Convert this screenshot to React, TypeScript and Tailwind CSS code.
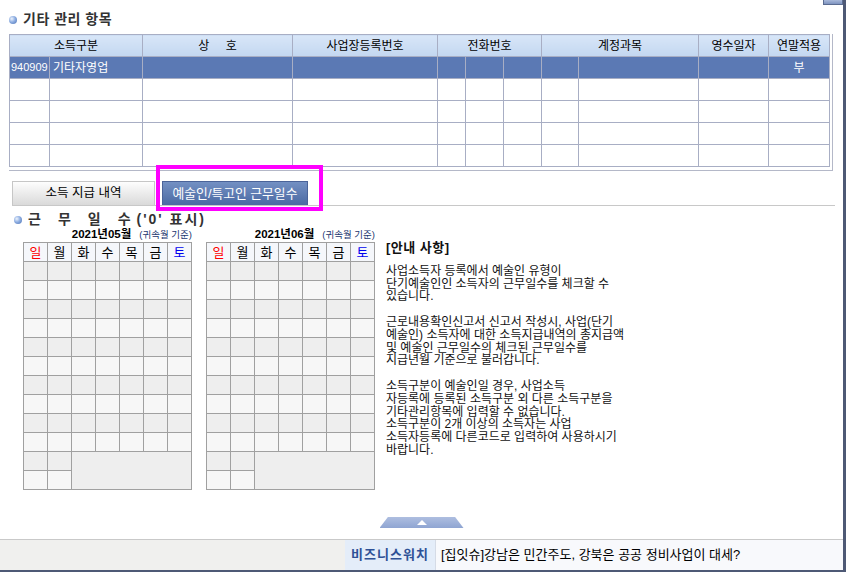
import React from 'react';

const days = ['일', '월', '화', '수', '목', '금', '토'];

const notice = [
  '사업소득자 등록에서 예술인 유형이',
  '단기예술인인 소득자의 근무일수를 체크할 수',
  '있습니다.',
  '',
  '근로내용확인신고서 신고서 작성시, 사업(단기',
  '예술인) 소득자에 대한 소득지급내역의 총지급액',
  '및 예술인 근무일수의 체크된 근무일수를',
  '지급년월 기준으로 불러갑니다.',
  '',
  '소득구분이 예술인일 경우, 사업소득',
  '자등록에 등록된 소득구분 외 다른 소득구분을',
  '기타관리항목에 입력할 수 없습니다.',
  '소득구분이 2개 이상의 소득자는 사업',
  '소득자등록에 다른코드로 입력하여 사용하시기',
  '바랍니다.',
];

function Bullet() {
  return (
    <span className="inline-block w-[8px] h-[8px] rounded-full bg-[radial-gradient(circle_at_35%_35%,#eef4fd_0%,#8eaee2_45%,#4b70b2_100%)]" />
  );
}

function Calendar({ label }: { label: string }) {
  const cell = 'p-0 h-[19px] border border-[#a0a0a0]';
  return (
    <div className="w-[169px]">
      <div className="h-[14px] flex items-center justify-end gap-[8px]">
        <span className="text-[11.5px] font-bold text-black leading-none">{label}</span>
        <span className="text-[9.5px] text-[#22366f] leading-none">(귀속월 기준)</span>
      </div>
      <table className="table-fixed border-collapse w-[169px]">
        <tbody>
          <tr className="bg-[#f5f7fb]">
            {days.map((d, i) => (
              <td
                key={d}
                className={`${cell} text-center text-[13px] leading-none ${
                  i === 0 ? 'text-[#ff0000]' : i === 6 ? 'text-[#0000ee]' : 'text-black'
                }`}
              >
                {d}
              </td>
            ))}
          </tr>
          {Array.from({ length: 10 }).map((_, r) => (
            <tr key={r} className={r % 2 === 0 ? 'bg-[#eeeeee]' : 'bg-[#f7f7f7]'}>
              {days.map((d) => (
                <td key={d} className={cell} />
              ))}
            </tr>
          ))}
          <tr className="bg-[#eeeeee]">
            <td className={cell} />
            <td className={cell} />
            <td className={`${cell} bg-[#eeeeee]`} colSpan={5} rowSpan={2} />
          </tr>
          <tr className="bg-[#f7f7f7]">
            <td className={cell} />
            <td className={cell} />
          </tr>
        </tbody>
      </table>
    </div>
  );
}

export default function App() {
  const th =
    'p-0 h-[22px] border border-[#a8aec4] bg-gradient-to-b from-[#d8e6f8] to-[#c3d7f0] font-normal text-center text-[12px] text-black';
  const td = 'p-0 h-[22px] border border-[#a8aec4]';

  return (
    <div className="relative w-[846px] h-[572px] flex flex-col bg-white border-r-[3px] border-b-[2px] border-[#4e5975] font-['Liberation_Sans','Noto_Sans_CJK_KR',sans-serif] text-black overflow-hidden">
      {/* scroll button remnant */}
      <div className="absolute top-0 right-0 w-[20px] h-[5px] border border-t-0 border-[#5b6c91] bg-gradient-to-b from-[#a9b9da] to-[#7e93c0]" />

      {/* 기타 관리 항목 */}
      <div className="pt-[12px] pl-[9px] flex items-center gap-[6px] h-[27px]">
        <Bullet />
        <span className="text-[14px] font-bold tracking-[0.5px] text-[#333333] leading-[15px]">기타 관리 항목</span>
      </div>

      <div className="mt-[7px] ml-[9px] w-[824px] border-r border-b border-[#b4b8c8] pr-[3px] pb-[3px]">
        <table className="table-fixed border-collapse w-[820px]">
          <colgroup>
            <col className="w-[40px]" />
            <col className="w-[93px]" />
            <col className="w-[150px]" />
            <col className="w-[145px]" />
            <col className="w-[28px]" />
            <col className="w-[38px]" />
            <col className="w-[38px]" />
            <col className="w-[37px]" />
            <col className="w-[120px]" />
            <col className="w-[70px]" />
            <col className="w-[61px]" />
          </colgroup>
          <thead>
            <tr>
              <th className={th} colSpan={2}>소득구분</th>
              <th className={`${th} whitespace-pre`}>{'상     호'}</th>
              <th className={th}>사업장등록번호</th>
              <th className={th} colSpan={3}>전화번호</th>
              <th className={th} colSpan={2}>계정과목</th>
              <th className={th}>영수일자</th>
              <th className={th}>연말적용</th>
            </tr>
          </thead>
          <tbody>
            <tr className="bg-[#5b79b4] text-white">
              <td className={`${td} text-[11px] pl-[1px] whitespace-nowrap overflow-hidden`}>940909</td>
              <td className={`${td} text-[12px] pl-[3px]`}>기타자영업</td>
              <td className={td} />
              <td className={td} />
              <td className={td} />
              <td className={td} />
              <td className={td} />
              <td className={td} />
              <td className={td} />
              <td className={td} />
              <td className={`${td} text-[12px] text-center`}>부</td>
            </tr>
            {Array.from({ length: 4 }).map((_, r) => (
              <tr key={r}>
                {Array.from({ length: 11 }).map((__, c) => (
                  <td key={c} className={td} />
                ))}
              </tr>
            ))}
          </tbody>
        </table>
      </div>

      {/* tabs */}
      <div className="mt-[10px] ml-[12px] w-[823px] flex gap-[7px] border-b border-[#c8c8c8]">
        <div className="w-[143px] h-[24px] flex items-center justify-center border border-b-0 border-[#c6c6c6] bg-gradient-to-b from-[#fdfdfd] to-[#dadada] text-[12.5px] text-black">
          소득 지급 내역
        </div>
        <div className="w-[146px] h-[24px] flex items-center justify-center border border-b-0 border-[#4a6399] bg-gradient-to-b from-[#7390c3] to-[#4c6aa3] text-[12.8px] text-white">
          예술인/특고인 근무일수
        </div>
      </div>

      {/* annotation box */}
      <div className="absolute left-[156px] top-[165px] w-[167px] h-[46px] border-[4px] border-[#ff00ff]" />

      {/* 근무일수 */}
      <div className="mt-[6px] pl-[14px] flex items-center gap-[6px] h-[15px]">
        <Bullet />
        <div className="flex items-center gap-[6px] text-[14px] font-bold text-[#333333] leading-[15px]">
          <div className="flex gap-[17px]">
            <span>근</span>
            <span>무</span>
            <span>일</span>
            <span>수</span>
          </div>
          <span className="tracking-[2px]">('0' 표시)</span>
        </div>
      </div>

      <div className="mt-[1px] pl-[23px] flex items-start">
        <Calendar label="2021년05월" />
        <div className="ml-[14px]">
          <Calendar label="2021년06월" />
        </div>
        <div className="ml-[11px] mt-[14px] text-[12px] leading-[12.8px] text-[#111111] whitespace-nowrap">
          <div className="text-[13px] font-bold tracking-[0.5px]">[안내 사항]</div>
          <div className="mt-[10px]">
            {notice.map((line, i) => (
              <div key={i} className="h-[12.8px]">
                {line || '\u00a0'}
              </div>
            ))}
          </div>
        </div>
      </div>

      {/* up toggle */}
      <div className="mt-auto mb-[11px] flex justify-center">
        <div className="w-[84px] h-[11px] flex items-center justify-center rounded-t-[6px] bg-gradient-to-b from-[#aebee0] to-[#8fa5d2] [clip-path:polygon(10%_0,90%_0,100%_100%,0_100%)]">
          <span className="w-0 h-0 border-l-[5px] border-r-[5px] border-b-[5px] border-l-transparent border-r-transparent border-b-white" />
        </div>
      </div>

      {/* status bar */}
      <div className="h-[31px] flex border-t border-[#c9c9c9] bg-[#f0f0ee]">
        <div className="w-[345px]" />
        <div className="w-[90px] flex items-center justify-center bg-[#e4edf9] text-[13px] font-bold tracking-[1px] text-[#2e5196]">
          비즈니스워치
        </div>
        <div className="flex-1 flex items-center pl-[5px] bg-[#f8f9fc] border-l border-[#d5dbe6] text-[13px] text-black">
          [집잇슈]강남은 민간주도, 강북은 공공 정비사업이 대세?
        </div>
      </div>
    </div>
  );
}
